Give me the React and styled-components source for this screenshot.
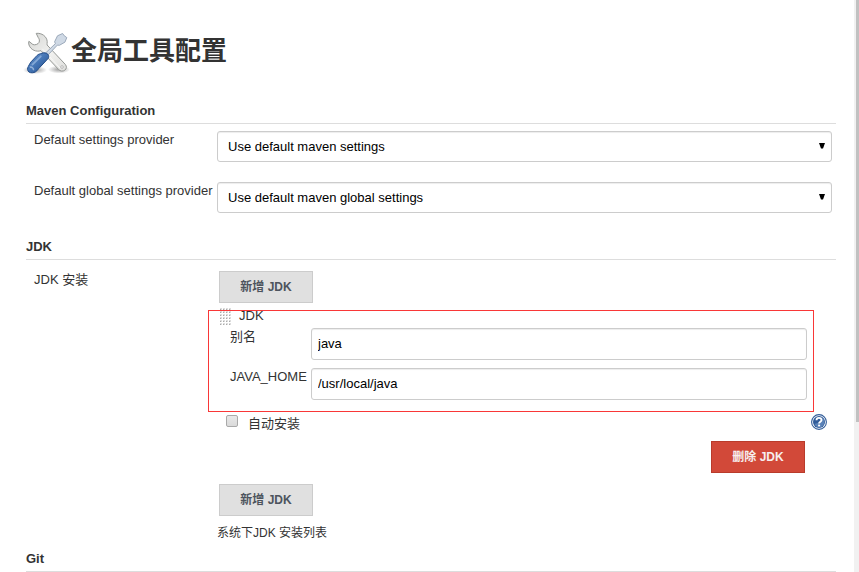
import React from "react";
import styled, { createGlobalStyle } from "styled-components";

const GlobalStyle = createGlobalStyle`
  *, *::before, *::after { box-sizing: border-box; }
  body {
    margin: 0;
    background: #fff;
    color: #333;
    font-family: "Liberation Sans", "Noto Sans CJK SC", sans-serif;
    font-size: 13px;
    overflow: hidden;
  }
`;

const Page = styled.div`
  display: flex;
  height: 572px;
  overflow: hidden;
`;

const Main = styled.main`
  width: 854px;
  padding: 0 18px 0 26px;
  flex: none;
`;

const ScrollTrack = styled.div`
  width: 5px;
  flex: none;
  padding-left: 2px;
  background: #f1f1f1;
`;

const ScrollThumb = styled.div`
  height: 422px;
  background: #c1c1c1;
`;

const Header = styled.header`
  display: flex;
  height: 98px;
  padding-top: 28px;
  margin-left: -4px;
`;

const Title = styled.h1`
  margin: 0 0 0 1px;
  font-size: 26px;
  line-height: 46px;
  font-weight: 700;
  white-space: nowrap;
`;

const SectionTitle = styled.h2`
  margin: 0;
  height: 26px;
  border-bottom: 1px solid #ddd;
  font-size: 13px;
  line-height: 25px;
  font-weight: 700;
`;

const SectionBody = styled.div`
  height: ${(p) => p.$height}px;
`;

const SettingRow = styled.div`
  display: grid;
  grid-template-columns: 183px 615px;
  padding: 7px 0 0 8px;
  height: 51px;
`;

const Label = styled.label`
  line-height: 18px;
  white-space: nowrap;
`;

const SelectBox = styled.div`
  display: flex;
  align-items: center;
  justify-content: space-between;
  height: 31px;
  padding: 0 6px 0 10px;
  border: 1px solid #ccc;
  border-radius: 3px;
  box-shadow: inset 0 1px 1px rgba(0, 0, 0, 0.075);
  color: #000;
`;

const JdkLayout = styled.div`
  display: grid;
  grid-template-columns: 183px 1fr;
  padding: 11px 0 0 8px;
`;

const Installations = styled.div`
  position: relative;
`;

const Button = styled.button`
  display: block;
  width: 94px;
  height: 32px;
  padding: 0;
  border: 1px solid ${(p) => (p.$danger ? "#b93b2b" : "#ccc")};
  background: ${(p) => (p.$danger ? "#d24939" : "#e0e0e0")};
  color: ${(p) => (p.$danger ? "#f6eeee" : "#4d545d")};
  font: inherit;
  font-size: 12px;
  font-weight: 700;
  line-height: 30px;
`;

const AddSlot = styled.div`
  padding-left: 2px;
`;

const GroupHead = styled.div`
  display: flex;
  gap: 8px;
  height: 25px;
  padding: 5px 0 0 3px;
  line-height: 16px;
`;

const FieldRow = styled.div`
  display: grid;
  grid-template-columns: 81px 496px;
  height: 40px;
  padding-left: 13px;
`;

const FieldLabel = styled.label`
  line-height: 17px;
  white-space: nowrap;
`;

const TextInput = styled.input`
  height: 32px;
  padding: 0 6px 2px;
  border: 1px solid #ccc;
  border-radius: 3px;
  box-shadow: inset 0 1px 1px rgba(0, 0, 0, 0.075);
  background: #fff;
  color: #000;
  font: inherit;
`;

const AutoRow = styled.div`
  display: flex;
  height: 33px;
  padding: 6px 9px 0 9px;
`;

const Checkbox = styled.input`
  appearance: none;
  width: 12px;
  height: 12px;
  margin: 1px 10px 0 0;
  border: 1px solid #a9a9a9;
  border-radius: 2px;
  background: linear-gradient(#e8e8e8, #dadada);
`;

const AutoLabel = styled.label`
  flex: 1;
  line-height: 20px;
`;

const DeleteSlot = styled.div`
  display: flex;
  justify-content: flex-end;
  height: 43px;
  padding-right: 31px;
`;

const Hint = styled.p`
  margin: 8px 0 0;
  font-size: 12px;
  line-height: 18px;
`;

const Highlight = styled.div`
  position: absolute;
  left: -9px;
  top: 39px;
  width: 606px;
  height: 102px;
  border: 1px solid #f93737;
  pointer-events: none;
`;

function ToolsIcon() {
  return (
    <svg width="48" height="48" viewBox="0 0 48 48" fill="none">
      <defs>
        <linearGradient id="steel" x1="0" y1="0" x2="1" y2="1">
          <stop offset="0" stopColor="#d5d6d4" />
          <stop offset=".55" stopColor="#f1f1ef" />
          <stop offset="1" stopColor="#dededc" />
        </linearGradient>
        <linearGradient id="handle" x1="0" y1="0" x2="1" y2="1">
          <stop offset="0" stopColor="#6f9bd2" />
          <stop offset=".5" stopColor="#4474b4" />
          <stop offset="1" stopColor="#204a87" />
        </linearGradient>
        <radialGradient id="shade">
          <stop offset="0" stopColor="#000" stopOpacity=".38" />
          <stop offset="1" stopColor="#000" stopOpacity="0" />
        </radialGradient>
      </defs>
      <ellipse cx="13" cy="42" rx="12" ry="4" fill="url(#shade)" />
      <ellipse cx="37" cy="41.5" rx="11" ry="4" fill="url(#shade)" />
      <path
        d="M14.2 5.4C19.6 4.6 25 8.5 25.2 13.7c0 1.5-.3 2.4-.1 3.3L43.4 36.5c1.6 2 1.2 4.3-.6 5.7-1.8 1.4-4.6 1.1-6.2-.7L19 22.7c-4.9 1.5-10.3-.8-12-5.7-.4-1.3-.5-2.7-.1-3.7l4 3.2c1.9.9 5.3-.2 6.2-2.2.6-1.8.3-3.3-.8-4.6z"
        fill="url(#steel)" stroke="#969996" strokeWidth="1"
      />
      <path d="M20.3 20.8 38 40.1" stroke="#fff" strokeWidth="1" opacity=".7" />
      <circle cx="40" cy="39" r="1.3" fill="#fff" stroke="#aaa" strokeWidth=".8" />
      <path
        d="m23.2 25.4 10.2-9.8-.8-1.8 2.9-6L40.6 5.5l1.7 2.3 2.5 1.8-1.9 4.6-5.5 3.1-2-.2-9.8 10.3z"
        fill="#cfd9e5" stroke="#93a1b3" strokeWidth=".9"
      />
      <path
        d="M20 25.2c2-.8 4.6-.3 6 1.3 1 1.4.9 2.8 0 4.1L18 39.2c-2 1.8-2.4 3.3-4.4 4.6-2 1.2-4.8 1.4-6.6.2-1.7-1.4-1.8-3.6-.7-5.5 1-1.8 1.5-3 2.8-4.7l6-6.4c1.3-1.3 3.1-1.6 4.9-2.2z"
        fill="url(#handle)" stroke="#204a87" strokeWidth="1"
      />
      <path d="M18.8 28.3 10.4 36.6" stroke="#a9c6ea" strokeWidth="1.8" strokeLinecap="round" opacity=".6" />
      <path d="M8 39.3c1.5-.8 4 1 3.4 3" stroke="#c8dbf2" strokeWidth="1.6" opacity=".6" />
    </svg>
  );
}

const dots = [0, 3, 6, 9];
const dotRows = [0, 3, 6, 9, 12, 15];

function DragHandle() {
  return (
    <svg width="11" height="17" viewBox="0 0 11 17">
      {dotRows.map((y) =>
        dots.map((x) => (
          <g key={`${x}-${y}`}>
            <rect x={x} y={y} width="2" height="2" fill="#ddd" />
            <rect x={x} y={y + 1} width="1" height="1" fill="#aaa" />
          </g>
        ))
      )}
    </svg>
  );
}

function HelpIcon() {
  return (
    <svg width="16" height="16" viewBox="0 0 16 16" fill="none">
      <circle cx="8" cy="8" r="7.4" fill="#fff" stroke="#315c99" strokeWidth="1.1" />
      <circle cx="8" cy="8" r="6" fill="#315c99" />
      <path d="M3.5 9.8C6 10 9.7 8 11.8 4.1A5.5 5.5 0 0 1 8 13.4a5.4 5.4 0 0 1-4.5-3.6z" fill="#5a82b8" />
      <path d="M5.5 6.2c.1-3 5-3 5-.3 0 1.8-2.4 1.7-2.4 3.7" stroke="#fff" strokeWidth="1.9" />
      <rect x="7.1" y="10.6" width="2" height="1.8" fill="#fff" />
    </svg>
  );
}

function Arrow() {
  return (
    <svg width="6" height="7" viewBox="0 0 6 7">
      <path d="M0 0h6L4 5.6H2z" fill="#000" />
    </svg>
  );
}

function Setting({ label, value }) {
  return (
    <SettingRow>
      <Label>{label}</Label>
      <SelectBox>
        <span>{value}</span>
        <Arrow />
      </SelectBox>
    </SettingRow>
  );
}

function Field({ label, value }) {
  return (
    <FieldRow>
      <FieldLabel>{label}</FieldLabel>
      <TextInput type="text" defaultValue={value} />
    </FieldRow>
  );
}

export default function App() {
  return (
    <Page>
      <GlobalStyle />
      <Main>
        <Header>
          <ToolsIcon />
          <Title>全局工具配置</Title>
        </Header>
        <SectionTitle>Maven Configuration</SectionTitle>
        <SectionBody $height={110}>
          <Setting label="Default settings provider" value="Use default maven settings" />
          <Setting label="Default global settings provider" value="Use default maven global settings" />
        </SectionBody>
        <SectionTitle>JDK</SectionTitle>
        <SectionBody $height={286}>
          <JdkLayout>
            <Label>JDK 安装</Label>
            <Installations>
              <AddSlot><Button>新增 JDK</Button></AddSlot>
              <GroupHead>
                <DragHandle />
                <span>JDK</span>
              </GroupHead>
              <Field label="别名" value="java" />
              <Field label="JAVA_HOME" value="/usr/local/java" />
              <AutoRow>
                <Checkbox type="checkbox" id="auto" />
                <AutoLabel htmlFor="auto">自动安装</AutoLabel>
                <HelpIcon />
              </AutoRow>
              <DeleteSlot><Button $danger>删除 JDK</Button></DeleteSlot>
              <AddSlot><Button>新增 JDK</Button></AddSlot>
              <Hint>系统下JDK 安装列表</Hint>
              <Highlight />
            </Installations>
          </JdkLayout>
        </SectionBody>
        <SectionTitle>Git</SectionTitle>
      </Main>
      <ScrollTrack><ScrollThumb /></ScrollTrack>
    </Page>
  );
}
